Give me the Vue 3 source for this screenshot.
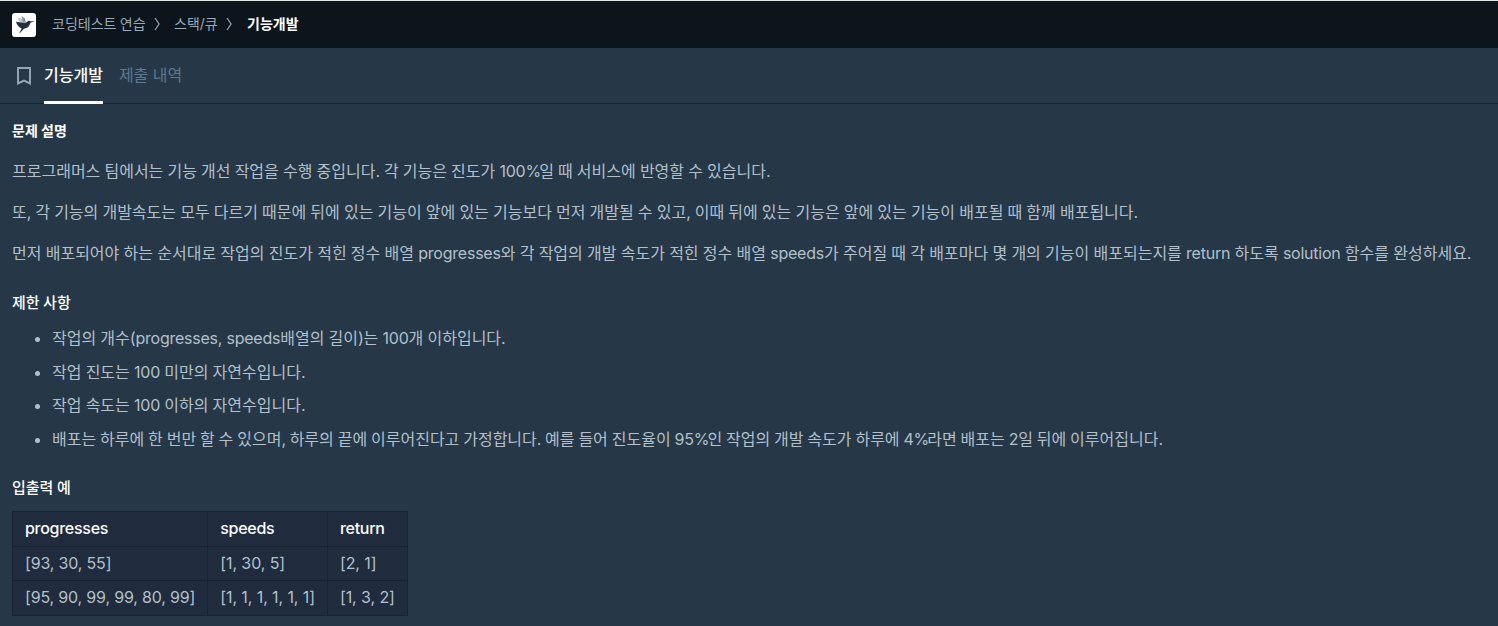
<template>
  <div class="challenge-page">
    <header class="navbar">
      <a class="logo" href="#" aria-label="home">
        <svg viewBox="0 0 24 24" width="24" height="24">
          <rect width="24" height="24" rx="3" fill="#fff" />
          <path d="M5.8 5 9.4 5.2 13 9 11.5 11 7 8.6Z" fill="#c3c8ce" />
          <path d="M9.5 3 12.8 5.2 14 9.8 11 9.2Z" fill="#8c96a1" />
          <path
            d="M4 8.8 12.8 10C14.2 9.7 14.8 8.4 16.4 7.9C17.4 7.7 18 7.9 18.6 8.3L23 8.6 18.8 9.4C18 10.2 17.9 11.6 17.1 12.8C16 14.6 14.1 15.4 12.2 15.8C10.7 16.7 9.5 18.6 7.6 20.6L7.5 19.7 9.6 15.4C7.3 14.4 4.7 12.2 4 8.8Z"
            fill="#263040"
          />
        </svg>
      </a>
      <ol class="breadcrumb">
        <li v-for="(crumb, i) in crumbs" :key="crumb" :class="{ active: i === crumbs.length - 1 }">
          <span>{{ crumb }}</span>
          <svg v-if="i < crumbs.length - 1" class="arrow" viewBox="0 0 6 14" width="6" height="14">
            <path d="M1 1 5 7 1 13" fill="none" stroke="currentColor" stroke-width="1.2" />
          </svg>
        </li>
      </ol>
    </header>

    <nav class="tabs">
      <button class="bookmark" aria-label="bookmark">
        <svg viewBox="0 0 16 20" width="16" height="20">
          <path d="M2 2H14V17.4L8 14.6 2 17.4Z" fill="none" stroke="#98a8b9" stroke-width="1.9" />
        </svg>
      </button>
      <button
        v-for="tab in tabs"
        :key="tab"
        class="tab"
        :class="{ active: tab === currentTab }"
        @click="currentTab = tab"
      >
        {{ tab }}
      </button>
    </nav>

    <main class="description">
      <h6 class="guide-title">문제 설명</h6>
      <p v-for="text in paragraphs" :key="text">
        <span v-for="(run, i) in splitRuns(text)" :key="i" :class="run.type">{{ run.text }}</span>
      </p>

      <h5>제한 사항</h5>
      <ul>
        <li v-for="text in limits" :key="text">
          <span v-for="(run, i) in splitRuns(text)" :key="i" :class="run.type">{{ run.text }}</span>
        </li>
      </ul>

      <h5>입출력 예</h5>
      <table>
        <thead>
          <tr>
            <th v-for="name in columns" :key="name">{{ name }}</th>
          </tr>
        </thead>
        <tbody>
          <tr v-for="row in examples" :key="row[0]">
            <td v-for="cell in row" :key="cell">{{ cell }}</td>
          </tr>
        </tbody>
      </table>
    </main>
  </div>
</template>

<script setup>
import { ref } from 'vue'

const crumbs = ['코딩테스트 연습', '스택/큐', '기능개발']
const tabs = ['기능개발', '제출 내역']
const currentTab = ref('기능개발')

const paragraphs = [
  '프로그래머스 팀에서는 기능 개선 작업을 수행 중입니다. 각 기능은 진도가 100%일 때 서비스에 반영할 수 있습니다.',
  '또, 각 기능의 개발속도는 모두 다르기 때문에 뒤에 있는 기능이 앞에 있는 기능보다 먼저 개발될 수 있고, 이때 뒤에 있는 기능은 앞에 있는 기능이 배포될 때 함께 배포됩니다.',
  '먼저 배포되어야 하는 순서대로 작업의 진도가 적힌 정수 배열 progresses와 각 작업의 개발 속도가 적힌 정수 배열 speeds가 주어질 때 각 배포마다 몇 개의 기능이 배포되는지를 return 하도록 solution 함수를 완성하세요.'
]

const limits = [
  '작업의 개수(progresses, speeds배열의 길이)는 100개 이하입니다.',
  '작업 진도는 100 미만의 자연수입니다.',
  '작업 속도는 100 이하의 자연수입니다.',
  '배포는 하루에 한 번만 할 수 있으며, 하루의 끝에 이루어진다고 가정합니다. 예를 들어 진도율이 95%인 작업의 개발 속도가 하루에 4%라면 배포는 2일 뒤에 이루어집니다.'
]

const columns = ['progresses', 'speeds', 'return']
const examples = [
  ['[93, 30, 55]', '[1, 30, 5]', '[2, 1]'],
  ['[95, 90, 99, 99, 80, 99]', '[1, 1, 1, 1, 1, 1]', '[1, 3, 2]']
]

// Latin words and percent signs get tighter tracking than the Korean text
const splitRuns = (text) =>
  text
    .split(/([!-$&-~]+|%)/)
    .filter((part) => part !== '')
    .map((part) => {
      if (part === '%') return { text: part, type: 'percent' }
      return { text: part, type: /^[!-~]/.test(part) ? 'latin' : 'korean' }
    })
</script>

<style>
body {
  background-color: #263747;
}
</style>

<style scoped>
.challenge-page {
  box-sizing: border-box;
  height: 626px;
  overflow: hidden;
  border-top: 1px solid #dfe9e5;
  background-color: #263747;
  color: #b2c0cc;
  font-family: Inter, 'Noto Sans CJK KR', sans-serif;
  font-size: 16px;
}

.navbar {
  display: flex;
  align-items: center;
  height: 47px;
  padding: 0 12px;
  background-color: #0c151c;
}

.logo {
  display: flex;
  margin: 1px 16px 0 0;
}

.breadcrumb {
  display: flex;
  margin: 0 0 2px;
  padding: 0;
  list-style: none;
  font-size: 14px;
  line-height: 24px;
  color: #98a8b9;
  word-spacing: -0.5px;
}

.breadcrumb li {
  display: flex;
  align-items: center;
}

.breadcrumb li.active {
  margin-left: 1px;
  color: #fff;
  font-weight: 700;
}

.arrow {
  margin: 1px 14px 0 8.4px;
}

.tabs {
  display: flex;
  box-sizing: border-box;
  height: 56px;
  padding: 0 12px;
  border-bottom: 1px solid #172334;
}

.tabs button {
  padding: 0;
  border: 0;
  background: none;
  font-family: inherit;
  cursor: pointer;
}

.bookmark {
  display: flex;
  align-items: center;
  width: 24px;
  margin-right: 8px;
  justify-content: center;
}

.tabs .tab {
  box-sizing: border-box;
  height: 56px;
  margin-right: 16px;
  border-bottom: 3px solid transparent;
  color: #5b7a90;
  font-size: 16px;
  line-height: 24px;
}

.tabs .tab.active {
  border-bottom-color: #fff;
  color: #fff;
  font-weight: 500;
}

.description {
  padding: 15px 12px 0;
}

.guide-title {
  margin: 0 0 15px;
  color: #fff;
  font-size: 14px;
  font-weight: 700;
  line-height: 24px;
}

p {
  margin: 0 0 14px;
  line-height: 27px;
  white-space: nowrap;
  word-spacing: -0.36px;
}

p:last-of-type {
  word-spacing: -0.25px;
}

.latin {
  letter-spacing: -0.23px;
}

.percent {
  letter-spacing: -2px;
}

h5 {
  margin: 24px 0 0;
  color: #fff;
  font-size: 15px;
  font-weight: 500;
  line-height: 24px;
  word-spacing: -0.5px;
}

ul {
  margin: 10px 0 0;
  padding-left: 40px;
  word-spacing: -0.3px;
}

li {
  white-space: nowrap;
}

ul li {
  height: 33.6px;
  line-height: 27px;
}

ul li:last-child {
  word-spacing: -0.62px;
}

ul + h5 {
  margin-top: 17px;
}

table {
  margin-top: 11px;
  border-collapse: collapse;
  background-color: #202b3d;
}

th,
td {
  box-sizing: border-box;
  height: 34.5px;
  padding: 0 12px 1px;
  border: 1px solid #172334;
  font-weight: 400;
  line-height: 24px;
  letter-spacing: -0.17px;
  text-align: left;
}

td + td {
  letter-spacing: -0.09px;
}

tr:last-child td {
  padding-bottom: 2px;
}

th {
  padding-bottom: 2px;
  color: #fff;
  font-weight: 500;
  letter-spacing: -0.28px;
}
</style>
